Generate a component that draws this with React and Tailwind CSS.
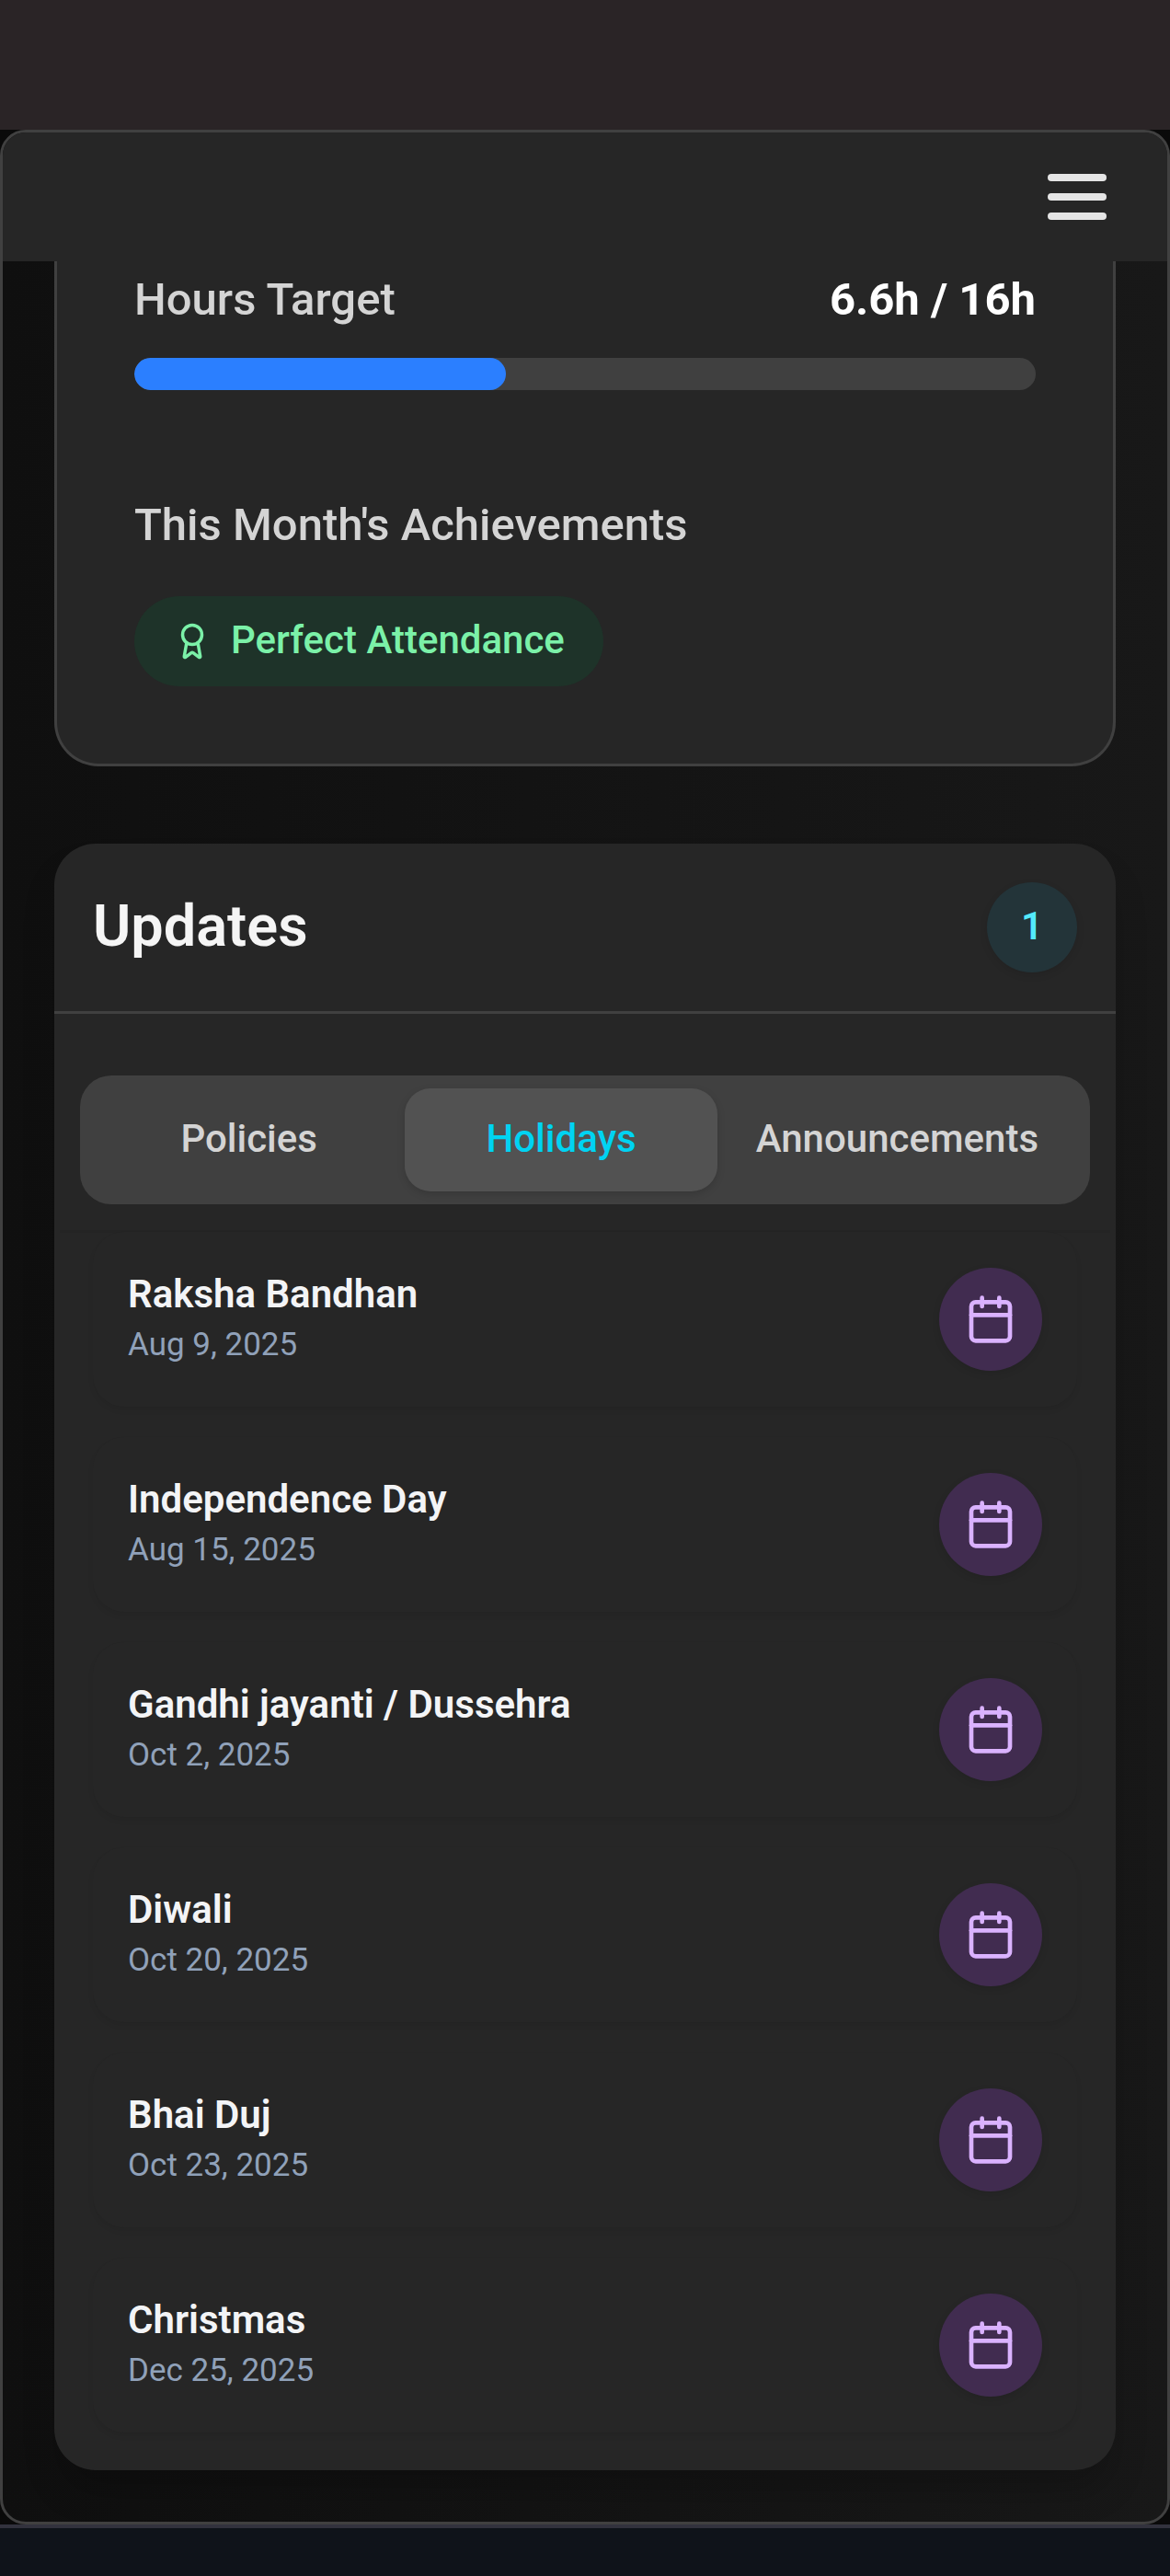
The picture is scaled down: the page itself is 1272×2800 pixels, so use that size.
import React from "react";
import { Award, Calendar } from "lucide-react";

const holidays = [
  ["Raksha Bandhan", "Aug 9, 2025"],
  ["Independence Day", "Aug 15, 2025"],
  ["Gandhi jayanti / Dussehra", "Oct 2, 2025"],
  ["Diwali", "Oct 20, 2025"],
  ["Bhai Duj", "Oct 23, 2025"],
  ["Christmas", "Dec 25, 2025"],
];

function Header() {
  return (
    <header className="flex h-[140px] shrink-0 items-center justify-end bg-[#262626] pr-[66px]">
      <button aria-label="Menu" className="flex flex-col gap-[13px]">
        <span className="h-2 w-16 rounded-[4px] bg-neutral-200" />
        <span className="h-2 w-16 rounded-[4px] bg-neutral-200" />
        <span className="h-2 w-16 rounded-[4px] bg-neutral-200" />
      </button>
    </header>
  );
}

function Goals() {
  return (
    <section className="mx-14 h-[549px] shrink-0 rounded-b-[48px] border-x-[3px] border-b-[3px] border-neutral-700 bg-[#262626] px-[84px] pt-2">
      <div className="flex justify-between text-[49px] leading-[67px]">
        <span className="font-medium text-neutral-300">Hours Target</span>
        <span className="font-bold text-white">6.6h / 16h</span>
      </div>
      <div className="mt-[30px] h-[35px] overflow-hidden rounded-full bg-neutral-700">
        <div className="h-full rounded-full bg-[#2b7fff]" style={{ width: `${(6.6 / 16) * 100}%` }} />
      </div>
      <h3 className="mt-[113px] text-[49px] leading-[67px] font-medium text-neutral-300">This Month's Achievements</h3>
      <div className="mt-[44px] inline-flex h-[98px] items-center gap-[21px] rounded-full bg-[#1e3329] px-[42px] text-[42px] font-medium text-[#7bf1a8]">
        <Award size={42} />
        <span className="pb-[3px]">Perfect Attendance</span>
      </div>
    </section>
  );
}

function Updates() {
  return (
    <section className="mx-14 mt-[84px] h-[1768px] shrink-0 overflow-hidden rounded-[45px] bg-[#262626] shadow-[0_28px_42px_-8px_rgba(0,0,0,0.22)]">
      <div className="flex h-[185px] items-center justify-between border-b-[3px] border-neutral-700 px-[42px]">
        <h2 className="pb-[3px] text-[63px] leading-none font-semibold text-neutral-100">Updates</h2>
        <span className="flex size-[98px] items-center justify-center rounded-full bg-[#233439] pb-[3px] text-[42px] font-semibold text-[#53eafd] shadow-[0_3px_8px_rgba(0,0,0,0.1)]">
          1
        </span>
      </div>
      <div className="mx-7 mt-[67px] flex h-[140px] rounded-[34px] bg-neutral-700 p-[14px] text-[42px] font-medium text-neutral-300">
        <button className="flex-1 pb-[3px]">Policies</button>
        <button className="flex-1 rounded-[28px] bg-neutral-600 pb-[3px] text-[#00d3f2] shadow-[0_3px_8px_rgba(0,0,0,0.15)]">Holidays</button>
        <button className="px-[42px] pb-[3px]">Announcements</button>
      </div>
      <div className="mx-[6px] mt-7 border-t-[3px] border-[#242424] px-9">
        <ul className="flex flex-col gap-[33px]">
          {holidays.map(([name, date]) => (
            <li
              key={name}
              className="-mt-px mb-px flex h-[190px] items-center justify-between rounded-[34px] bg-[#262626] px-[38px] shadow-[0_4px_7px_-1px_rgba(0,0,0,0.08)]"
            >
              <div className="flex h-[112px] flex-col">
                <span className="text-[42px] leading-[58px] font-semibold text-gray-100">{name}</span>
                <span className="text-[35px] leading-[51px] text-[#90a1b9]">{date}</span>
              </div>
              <span className="flex size-[112px] items-center justify-center rounded-full bg-[#412c50] text-[#dab2ff] shadow-[0_3px_8px_rgba(0,0,0,0.1)]">
                <Calendar size={56} />
              </span>
            </li>
          ))}
        </ul>
      </div>
    </section>
  );
}

export default function App() {
  return (
    <div className="flex h-[2800px] w-[1272px] flex-col overflow-hidden bg-[#0a0a0a] font-[Roboto,sans-serif]">
      <div className="h-[141px] shrink-0 bg-[#2a2426]" />
      <main className="flex h-[2603px] shrink-0 flex-col overflow-hidden rounded-[28px] border-[3px] border-neutral-700 bg-linear-to-r from-[#0f0f0f] to-[#181818]">
        <Header />
        <Goals />
        <Updates />
      </main>
      <div className="h-[56px] shrink-0 border-t-4 border-[#32323d] bg-[#0f131a]" />
    </div>
  );
}
